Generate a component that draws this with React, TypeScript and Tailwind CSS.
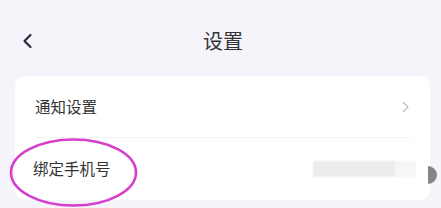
import React from "react";

export default function App() {
  const font = { fontFamily: '"Noto Sans CJK SC", "Noto Sans", sans-serif' };
  return (
    <div className="relative w-[441px] h-[208px] overflow-hidden bg-[#f5f4fa]" style={font}>
      <div className="relative h-[76px] pt-[21px]">
        <div className="relative h-10 flex items-center justify-center">
          <svg className="absolute left-[22px] top-[12px]" width="11" height="16" viewBox="0 0 11 16" fill="none">
            <path d="M8.5 2 L2.5 8 L8.5 14" stroke="#2b2b3a" strokeWidth="2.2" strokeLinecap="round" strokeLinejoin="round" />
          </svg>
          <span className="text-[20px] leading-none text-[#333338] pl-[5px]">设置</span>
        </div>
      </div>
      <div className="ml-[15px] w-[415px] bg-white rounded-[10px]">
        <div className="h-[62px] pl-[20px] pr-[19px]">
          <div className="h-full flex items-center justify-between border-b border-[#f2f2f4]">
            <span className="text-[15.5px] text-[#333]">通知设置</span>
            <svg width="8" height="12" viewBox="0 0 8 12" fill="none" className="mr-[1px]">
              <path d="M1.5 1.5 L6 6 L1.5 10.5" stroke="#bdbdc2" strokeWidth="1.2" strokeLinecap="round" strokeLinejoin="round" />
            </svg>
          </div>
        </div>
        <div className="h-[62px] pl-[18px] pr-[14px] flex items-center justify-between">
          <span className="text-[15.5px] text-[#333]">绑定手机号</span>
          <div className="w-[103px] h-[16px] flex">
            <div className="w-[83px] h-full bg-[#ececec] blur-[1px]"></div>
            <div className="w-[20px] h-full bg-[#f6f6f6] blur-[1px]"></div>
          </div>
        </div>
      </div>
      <div className="absolute left-[428px] top-[166px] w-[9px] h-[18px] rounded-r-full bg-[#858585]"></div>
      <svg className="absolute left-0 top-0" width="441" height="208" viewBox="0 0 441 208" fill="none">
        <ellipse cx="73.5" cy="172.5" rx="62.5" ry="33" stroke="#d63fcb" strokeWidth="2.6" />
      </svg>
    </div>
  );
}
